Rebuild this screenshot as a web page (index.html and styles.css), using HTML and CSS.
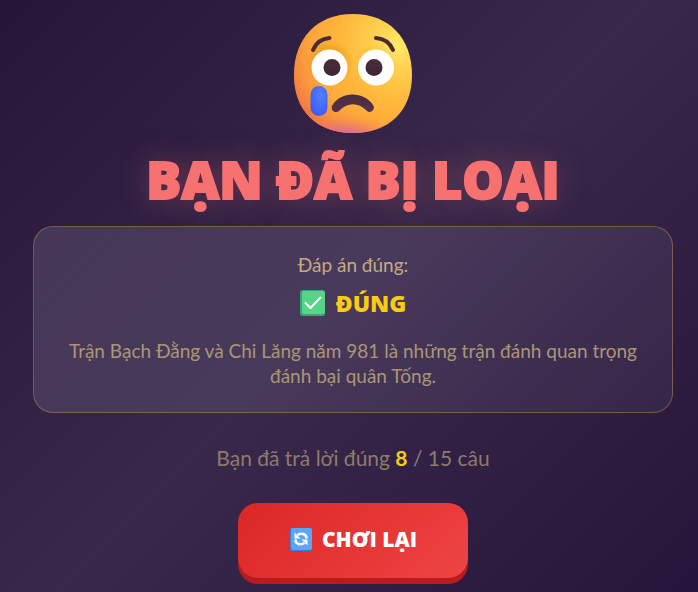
FILE: index.html
```html
<!DOCTYPE html>
<html lang="vi">
<head>
<meta charset="utf-8">
<meta name="viewport" content="width=device-width, initial-scale=1">
<title>Bạn đã bị loại</title>
<link rel="stylesheet" href="styles.css">
</head>
<body>
<main class="screen">
  <svg class="face" viewBox="0 0 120 120" aria-hidden="true">
    <defs>
      <radialGradient id="skin" cx="0.88" cy="0.26" r="0.85">
        <stop offset="0" stop-color="#ffec6a"/>
        <stop offset="0.25" stop-color="#fed04e"/>
        <stop offset="0.6" stop-color="#ffb63a"/>
        <stop offset="1" stop-color="#fba03c"/>
      </radialGradient>
      <radialGradient id="warm" cx="0.55" cy="0.42" r="0.62">
        <stop offset="0.6" stop-color="#f4743b" stop-opacity="0"/>
        <stop offset="1" stop-color="#ef6548" stop-opacity="0.9"/>
      </radialGradient>
      <linearGradient id="warmFade" x1="0" y1="0.8" x2="0.7" y2="0.3">
        <stop offset="0" stop-color="#fff"/>
        <stop offset="0.65" stop-color="#000"/>
      </linearGradient>
      <mask id="leftSide"><rect width="120" height="120" fill="url(#warmFade)"/></mask>
      <radialGradient id="chin" gradientUnits="userSpaceOnUse" cx="0" cy="0" r="1" gradientTransform="translate(52 128) rotate(3) scale(62 26)">
        <stop offset="0" stop-color="#d562b4"/>
        <stop offset="0.35" stop-color="#dd68a0" stop-opacity="0.85"/>
        <stop offset="1" stop-color="#f58b55" stop-opacity="0"/>
      </radialGradient>
      <radialGradient id="shade">
        <stop offset="0.5" stop-color="#d99100" stop-opacity="0.5"/>
        <stop offset="1" stop-color="#d99100" stop-opacity="0"/>
      </radialGradient>
      <linearGradient id="mouth" x1="0" y1="0" x2="0" y2="1">
        <stop offset="0" stop-color="#4a2c3a"/>
        <stop offset="1" stop-color="#583052"/>
      </linearGradient>
      <linearGradient id="pupil" x1="0" y1="0" x2="0" y2="1">
        <stop offset="0" stop-color="#4b2e3c"/>
        <stop offset="1" stop-color="#3d2432"/>
      </linearGradient>
      <radialGradient id="tear" cx="0.6" cy="0.3" r="0.75">
        <stop offset="0" stop-color="#4f80ff"/>
        <stop offset="1" stop-color="#3e5af0"/>
      </radialGradient>
    </defs>
    <path d="M60 1C96 1 119 25 119 62C119 98 96 120 60 120C24 120 1 98 1 62C1 25 24 1 60 1Z" fill="url(#skin)"/>
    <path d="M60 1C96 1 119 25 119 62C119 98 96 120 60 120C24 120 1 98 1 62C1 25 24 1 60 1Z" fill="url(#warm)" mask="url(#leftSide)"/>
    <path d="M60 1C96 1 119 25 119 62C119 98 96 120 60 120C24 120 1 98 1 62C1 25 24 1 60 1Z" fill="url(#chin)"/>
    <circle cx="37" cy="50" r="24" fill="url(#shade)"/>
    <circle cx="83" cy="52" r="22" fill="url(#shade)" opacity="0.4"/>
    <circle cx="36.500" cy="54.500" r="18" fill="#fff"/>
    <circle cx="83" cy="54.500" r="18" fill="#fff"/>
    <circle cx="39" cy="54.500" r="8.500" fill="url(#pupil)"/>
    <circle cx="81" cy="54.500" r="8.500" fill="url(#pupil)"/>
    <path d="M20 37C23 30 29 25.500 36.500 25" fill="none" stroke="#4a2b3b" stroke-width="4" stroke-linecap="round"/>
    <path d="M83 25C91 25.500 97 30 100 37" fill="none" stroke="#4a2b3b" stroke-width="4" stroke-linecap="round"/>
    <rect x="17.500" y="73" width="17" height="30" rx="8.500" fill="url(#tear)"/>
    <path d="M39.500 92C48 78 71 78 80 92C83 96.500 77 101.500 73.500 97.500C65 89 55 89 46.500 97.500C42.500 101.500 36.500 97 39.500 92Z" fill="url(#mouth)"/>
  </svg>

  <h1 class="title">BẠN ĐÃ BỊ LOẠI</h1>

  <section class="card">
    <p class="label">Đáp án đúng:</p>
    <p class="answer">
      <svg class="answer-icon" viewBox="0 0 26 26" aria-hidden="true">
        <rect width="25" height="26" rx="3" fill="#36a879"/>
        <rect x="2" y="1" width="23" height="23" rx="2" fill="#56d58a"/>
        <path d="M5.500 13L10.500 18L20.500 7.500" fill="none" stroke="#fff" stroke-width="2" stroke-linecap="round" stroke-linejoin="round"/>
      </svg>
      <span>ĐÚNG</span>
    </p>
    <p class="explanation">Trận Bạch Đằng và Chi Lăng năm 981 là những trận đánh quan trọng đánh bại quân Tống.</p>
  </section>

  <p class="score">Bạn đã trả lời đúng <strong>8</strong> / 15 câu</p>

  <button class="replay" type="button">
    <svg class="replay-icon" viewBox="0 0 24 24" aria-hidden="true">
      <rect x="1" y="0" width="22" height="23" rx="2" fill="#397fd5"/>
      <rect x="2" y="0" width="21" height="22" rx="2" fill="#58a6fa"/>
      <g fill="none" stroke="#fff" stroke-width="2.500">
        <path d="M8.500 7C12 4.800 17.500 5.500 17.500 10.500"/>
        <path d="M15.500 15C12 17.200 6.500 16.500 6.500 11.500"/>
      </g>
      <path d="M5.500 4.500V10.500H11.500Z" fill="#fff"/>
      <path d="M18.500 17.500V11.500H12.500Z" fill="#fff"/>
    </svg>
    <span>CHƠI LẠI</span>
  </button>
</main>
</body>
</html>
```

FILE: styles.css
```css
* {
  box-sizing: border-box;
}

body {
  margin: 0;
  min-height: 100vh;
  background: linear-gradient(135deg, #261539 0%, #38284b 50%, #26153a 100%);
  font-family: Lato, "Noto Sans", sans-serif;
}

.screen {
  display: flex;
  flex-direction: column;
  align-items: center;
  padding: 13px 25px 8px 33px;
  text-align: center;
}

p,
h1 {
  margin: 0;
}

.face {
  width: 120px;
  height: 120px;
}

.title {
  margin: 10px 0 12px;
  color: #f87171;
  font-family: "Open Sans", "Noto Sans", sans-serif;
  font-size: 52px;
  font-weight: 800;
  line-height: 71px;
  text-shadow: 0 0 30px rgba(248, 113, 113, 0.35);
  -webkit-text-stroke: 2px #f87171;
  stroke-linejoin: round;
}

.card {
  width: 100%;
  max-width: 640px;
  padding: 24px 32px;
  border: 1px solid rgba(202, 160, 60, 0.4);
  border-radius: 20px;
  background: linear-gradient(135deg, rgba(240, 235, 255, 0.13), rgba(240, 235, 255, 0.05));
}

.label {
  color: #c3aa80;
  font-size: 19px;
  line-height: 28px;
}

.answer {
  display: flex;
  align-items: center;
  justify-content: center;
  gap: 10px;
  margin: 8px 0 19px;
  color: #facc15;
  font-family: "Open Sans", "Noto Sans", sans-serif;
  font-size: 23px;
  font-weight: 800;
  line-height: 32px;
}

.answer-icon {
  width: 26px;
  height: 26px;
}

.explanation {
  color: #ab9677;
  font-size: 19px;
  line-height: 25px;
}

.score {
  margin: 30px 0;
  color: #8d7b6c;
  font-size: 21px;
  line-height: 30px;
}

.score strong {
  color: #facc15;
}

.replay {
  display: flex;
  align-items: center;
  justify-content: center;
  gap: 9px;
  min-width: 230px;
  padding: 19px 48px 21px;
  border: 0;
  border-radius: 20px;
  background: linear-gradient(135deg, #dc2626, #ef4444);
  box-shadow: 0 6px 0 #b91c1c;
  color: #fff;
  font-family: "Open Sans", "Noto Sans", sans-serif;
  font-size: 21px;
  font-weight: 800;
  line-height: 35px;
}

.replay-icon {
  width: 24px;
  height: 24px;
}
```
